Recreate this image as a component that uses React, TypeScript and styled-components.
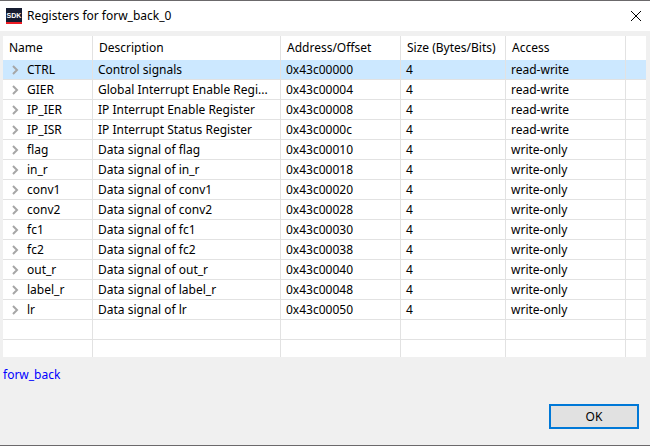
import React from "react";
import styled, { createGlobalStyle } from "styled-components";

const GlobalStyle = createGlobalStyle`
  *, *::before, *::after { box-sizing: border-box; }
  body {
    margin: 0;
    background: #f0f0f0;
    color: #000;
    font: 12px/18px "Noto Sans", "Open Sans", sans-serif;
  }
`;

const Dialog = styled.section`
  display: flex;
  flex-direction: column;
  min-height: 100vh;
  border-top: 1px solid #6b696b;
  border-bottom: 1px solid #6b696b;
  background: #f0f0f0;
`;

const TitleBar = styled.header`
  display: flex;
  align-items: center;
  height: 30px;
  padding: 0 8px 0 6px;
  gap: 5px;
  background: #fff;
`;

const Title = styled.h1`
  flex: 1;
  margin: 0;
  font-size: 12px;
  font-weight: 400;
  line-height: 18px;
`;

const CloseButton = styled.button`
  display: flex;
  align-items: center;
  justify-content: center;
  width: 12px;
  height: 12px;
  padding: 0;
  border: 0;
  background: transparent;
`;

const TableFrame = styled.div`
  margin: 5px 4px 0 3px;
  background: #fff;
`;

const RegisterTable = styled.table`
  width: 100%;
  table-layout: fixed;
  border-collapse: separate;
  border-spacing: 0;
`;

const Column = styled.col<{ $width?: number }>`
  width: ${({ $width }) => ($width ? `${$width}px` : "auto")};
`;

const HeaderCell = styled.th`
  height: 24px;
  padding: 0 0 0 6px;
  border-right: 1px solid #e2e2e2;
  font-weight: 400;
  text-align: left;
  white-space: nowrap;

  &:last-child { border-right: 0; }
`;

const Row = styled.tr<{ $selected?: boolean }>`
  background: ${({ $selected }) => ($selected ? "#cce8ff" : "#fff")};
`;

const Cell = styled.td`
  height: 20px;
  padding: 0 5px;
  border-right: 1px solid #e2e2e2;
  border-bottom: 1px solid #e2e2e2;
  overflow: hidden;
  text-overflow: ellipsis;
  white-space: nowrap;

  &:last-child { border-right: 0; }
  tr:last-child > & { height: 17px; border-bottom: 0; }
`;

const NameContent = styled.div`
  display: flex;
  align-items: center;
  gap: 7px;
  padding-left: 3px;
`;

const ExpandButton = styled.button`
  display: flex;
  width: 9px;
  height: 10px;
  padding: 0;
  border: 0;
  background: transparent;
`;

const DriverLink = styled.a`
  align-self: flex-start;
  margin: 9px 3px 0;
  color: #0000ff;
  text-decoration: none;
`;

const Footer = styled.footer`
  display: flex;
  justify-content: flex-end;
  margin-top: auto;
  padding: 0 11px 16px;
`;

const OkButton = styled.button`
  width: 90px;
  height: 25px;
  padding: 0;
  border: 2px solid #0078d7;
  background: #e1e1e1;
  color: #000;
  font: inherit;
`;

const columns = [
  { label: "Name", width: 90 },
  { label: "Description", width: 188 },
  { label: "Address/Offset", width: 120 },
  { label: "Size (Bytes/Bits)", width: 105 },
  { label: "Access", width: 120 },
];

const registers = [
  ["CTRL", "Control signals", "0x43c00000", "4", "read-write"],
  ["GIER", "Global Interrupt Enable Regi...", "0x43c00004", "4", "read-write"],
  ["IP_IER", "IP Interrupt Enable Register", "0x43c00008", "4", "read-write"],
  ["IP_ISR", "IP Interrupt Status Register", "0x43c0000c", "4", "read-write"],
  ["flag", "Data signal of flag", "0x43c00010", "4", "write-only"],
  ["in_r", "Data signal of in_r", "0x43c00018", "4", "write-only"],
  ["conv1", "Data signal of conv1", "0x43c00020", "4", "write-only"],
  ["conv2", "Data signal of conv2", "0x43c00028", "4", "write-only"],
  ["fc1", "Data signal of fc1", "0x43c00030", "4", "write-only"],
  ["fc2", "Data signal of fc2", "0x43c00038", "4", "write-only"],
  ["out_r", "Data signal of out_r", "0x43c00040", "4", "write-only"],
  ["label_r", "Data signal of label_r", "0x43c00048", "4", "write-only"],
  ["lr", "Data signal of lr", "0x43c00050", "4", "write-only"],
];

const blankRows = ["blank-1", "blank-2"];

function SdkIcon() {
  return (
    <svg width="16" height="16" viewBox="0 0 16 16" aria-hidden="true">
      <rect width="16" height="14" fill="#161c30" />
      <rect y="14" width="16" height="2" fill="#ed1c24" />
      <text
        x="8"
        y="10"
        textAnchor="middle"
        fontFamily="Liberation Sans, sans-serif"
        fontSize="7"
        fontWeight="700"
        fill="#fff"
      >
        SDK
      </text>
    </svg>
  );
}

function CloseIcon() {
  return (
    <svg width="12" height="12" viewBox="0 0 12 12" aria-hidden="true">
      <path d="M1 1l10 10M11 1L1 11" fill="none" stroke="#000" strokeWidth="1" />
    </svg>
  );
}

function ChevronIcon() {
  return (
    <svg width="9" height="10" viewBox="0 0 9 10" aria-hidden="true">
      <path d="M2 1l4 4-4 4" fill="none" stroke="#a6a6a6" strokeWidth="2" />
    </svg>
  );
}

export default function App() {
  return (
    <>
      <GlobalStyle />
      <Dialog role="dialog" aria-labelledby="dialog-title">
        <TitleBar>
          <SdkIcon />
          <Title id="dialog-title">Registers for forw_back_0</Title>
          <CloseButton type="button" aria-label="Close">
            <CloseIcon />
          </CloseButton>
        </TitleBar>
        <TableFrame>
          <RegisterTable aria-labelledby="dialog-title">
            <colgroup>
              {columns.map((column) => (
                <Column key={column.label} $width={column.width} />
              ))}
              <Column />
            </colgroup>
            <thead>
              <tr>
                {columns.map((column) => (
                  <HeaderCell key={column.label} scope="col">
                    {column.label}
                  </HeaderCell>
                ))}
                <HeaderCell as="td" />
              </tr>
            </thead>
            <tbody>
              {registers.map(([name, ...values], index) => (
                <Row key={name} $selected={index === 0} aria-selected={index === 0}>
                  <Cell>
                    <NameContent>
                      <ExpandButton type="button" aria-label={`Expand ${name}`}>
                        <ChevronIcon />
                      </ExpandButton>
                      {name}
                    </NameContent>
                  </Cell>
                  {values.map((value, i) => (
                    <Cell key={columns[i + 1].label}>{value}</Cell>
                  ))}
                  <Cell />
                </Row>
              ))}
              {blankRows.map((id) => (
                <Row key={id}>
                  {columns.map((column) => (
                    <Cell key={column.label} />
                  ))}
                  <Cell />
                </Row>
              ))}
            </tbody>
          </RegisterTable>
        </TableFrame>
        <DriverLink href="#forw_back">forw_back</DriverLink>
        <Footer>
          <OkButton type="button">OK</OkButton>
        </Footer>
      </Dialog>
    </>
  );
}
